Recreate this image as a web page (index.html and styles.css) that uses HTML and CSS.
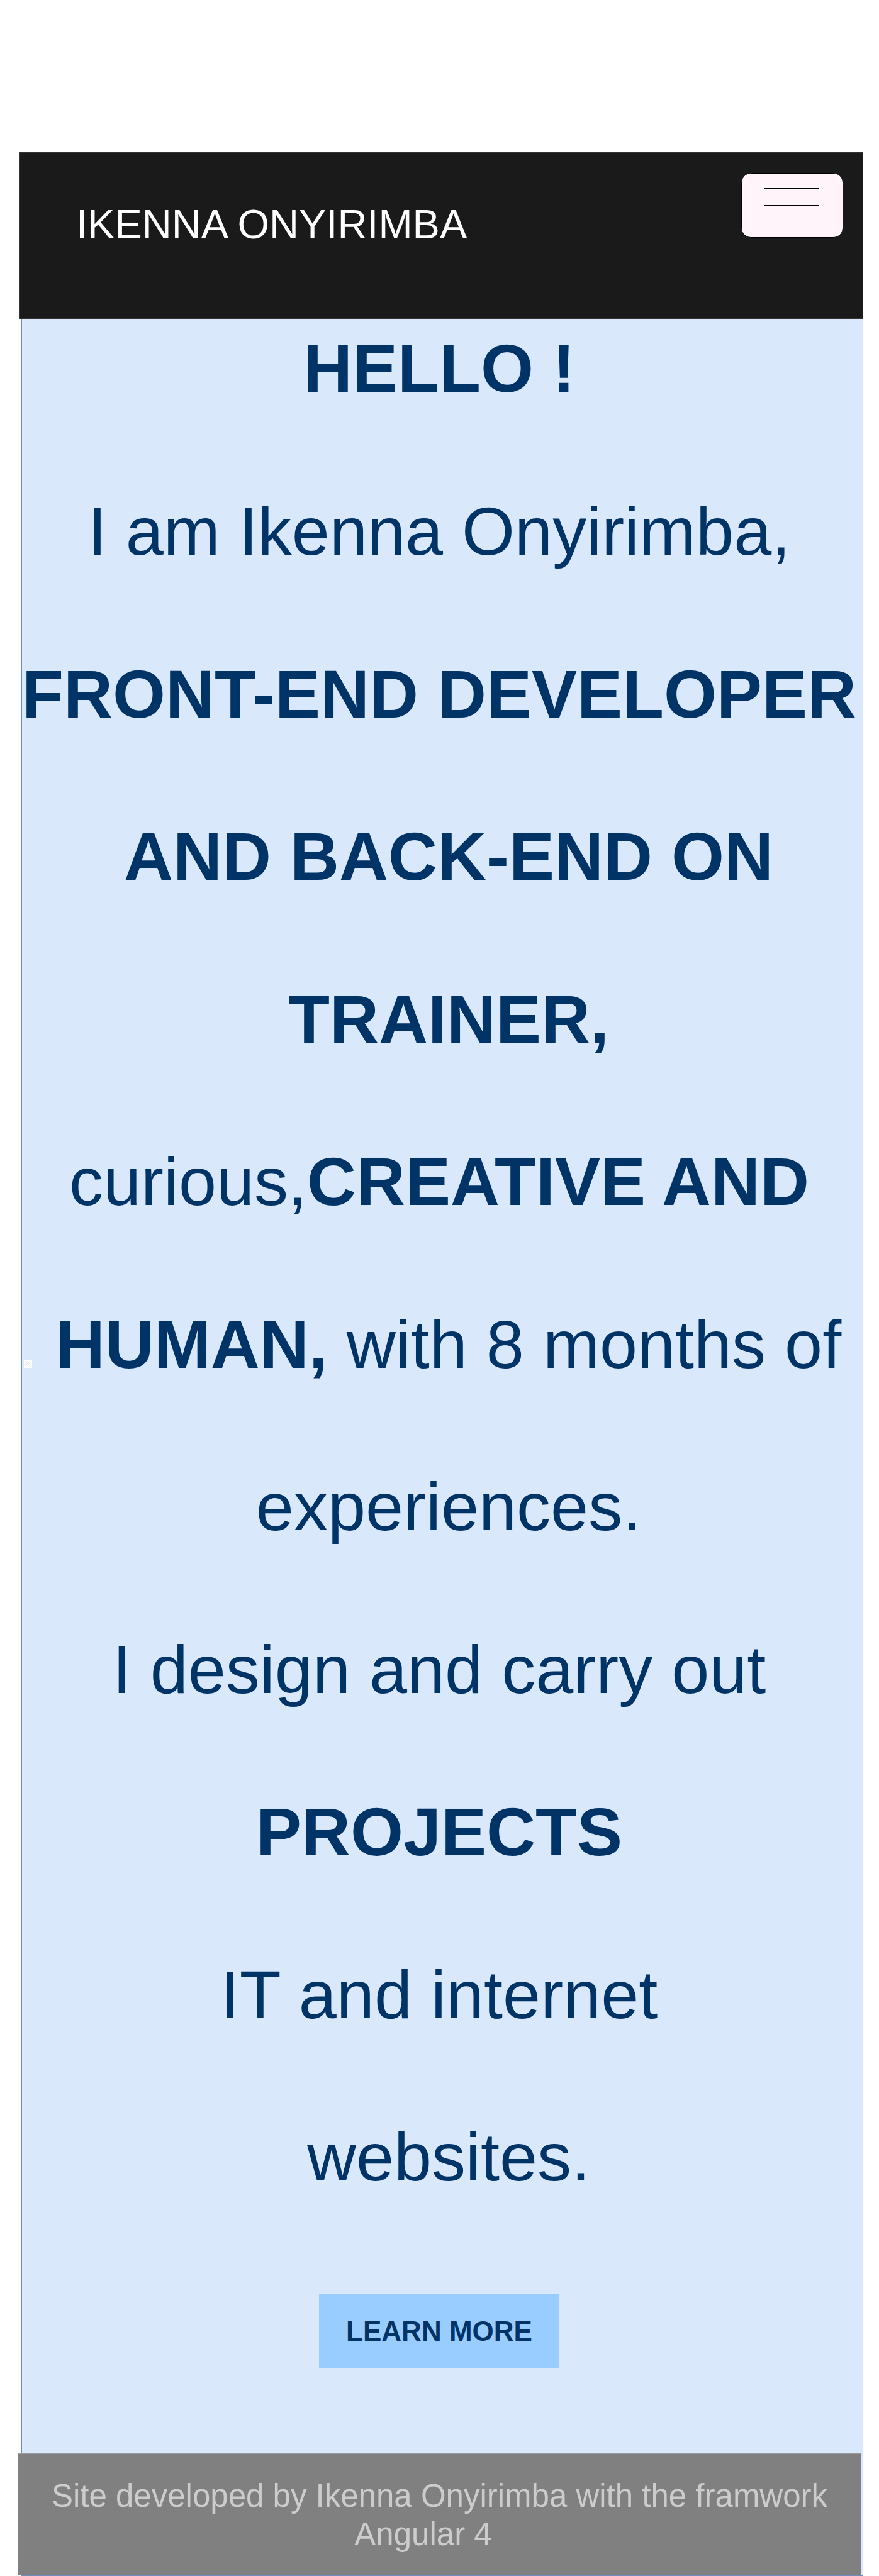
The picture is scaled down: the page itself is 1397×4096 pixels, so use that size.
FILE: index.html
```html
<!DOCTYPE html>
<html lang="en">
<head>
<meta charset="utf-8">
<meta name="viewport" content="width=device-width, initial-scale=1">
<title>Ikenna Onyirimba</title>
<link rel="stylesheet" href="styles.css">
</head>
<body>
<header class="site-header">
  <a class="brand" href="#">IKENNA ONYIRIMBA</a>
  <button class="menu-button" type="button" aria-label="Menu">
    <svg class="menu-icon" viewBox="0 0 90 62" aria-hidden="true">
      <path class="menu-bars" d="M1 1.5H88M1 28.5H88M0 59.5H87"/>
    </svg>
  </button>
</header>
<div class="panel">
  <main class="hero">
    <h1 class="hero-line hero-title">HELLO !</h1>
    <p class="hero-line">I am Ikenna Onyirimba,</p>
    <p class="hero-line"><strong>FRONT-END DEVELOPER<br>&nbsp;AND BACK-END ON</strong></p>
    <p class="hero-line"><strong>&nbsp;TRAINER,</strong><br>curious,<strong>CREATIVE AND</strong></p>
    <p class="hero-line"><svg class="grain" viewBox="0 0 13 13" aria-hidden="true"><path class="grain-base" d="M0 0h13v13H0z"/><path class="grain-mark" d="M1 11l9-9M4 4l7 7M2 5h5M7 8l2-2"/></svg><strong>&nbsp;HUMAN,</strong> with 8 months of<br>&nbsp;experiences.</p>
    <p class="hero-line">I design and carry out<br><strong>PROJECTS</strong></p>
    <p class="hero-line">IT and internet<br>&nbsp;websites.</p>
    <button class="learn-more" type="button">LEARN MORE</button>
  </main>
  <footer class="site-footer">Site developed by Ikenna Onyirimba with the framwork<br><span class="framework">Angular 4</span></footer>
</div>
</body>
</html>
```
FILE: styles.css
```css
* {
  box-sizing: border-box;
}

body {
  margin: 0;
  padding: 242px 25px 0 28px;
  background: #fff;
  font-family: "Liberation Sans", Arial, sans-serif;
}

.site-header {
  display: flex;
  justify-content: space-between;
  align-items: flex-start;
  min-height: 265px;
  margin-left: 2px;
  padding: 32px 31px 0 90px;
  border: 1px solid #333;
  background: #1a1a1a;
}

.brand {
  margin-top: 45px;
  color: #fff;
  font-size: 65px;
  line-height: 74px;
  text-decoration: none;
}

.menu-button {
  display: flex;
  justify-content: center;
  align-items: flex-start;
  width: 162px;
  height: 103px;
  margin: 0;
  padding: 22px 0 0;
  border: 1px solid #000;
  border-radius: 15px;
  background: #fff4fa;
}

.menu-icon {
  display: block;
  width: 90px;
  height: 62px;
}

.menu-bars {
  fill: none;
  stroke: #000;
  stroke-width: 1;
}

.panel {
  margin-left: 6px;
  border: 1px solid #6c8ebf;
  border-top: 0;
  background: #dae8fc;
}

.hero {
  display: flex;
  flex-direction: column;
  gap: 1px;
  padding: 0 10px 135px 0;
  color: #036;
  text-align: center;
}

.hero-line {
  position: relative;
  margin: 0;
  font-size: 108px;
  font-weight: 400;
  line-height: 258px;
  white-space: nowrap;
}

.hero-title {
  margin-bottom: 50px;
  font-weight: 700;
  line-height: 158px;
}

.grain {
  position: absolute;
  top: 153px;
  left: 3px;
  width: 13px;
  height: 13px;
}

.grain-base {
  fill: #fcfcfc;
}

.grain-mark {
  fill: none;
  stroke: #e4e4e4;
}

.learn-more {
  align-self: center;
  height: 119px;
  margin: 87px 0 0;
  padding: 0 43px;
  border: 0;
  background: #9cf;
  color: #036;
  font-family: inherit;
  font-size: 44px;
  font-weight: 700;
}

.site-footer {
  margin: 0 2px 0 -7px;
  padding: 36px 32px 35px;
  border-top: 1px solid #999;
  background: #808080;
  color: #ccc;
  font-size: 51px;
  line-height: 61px;
  text-align: center;
}

.framework {
  padding-right: 52px;
}
```
